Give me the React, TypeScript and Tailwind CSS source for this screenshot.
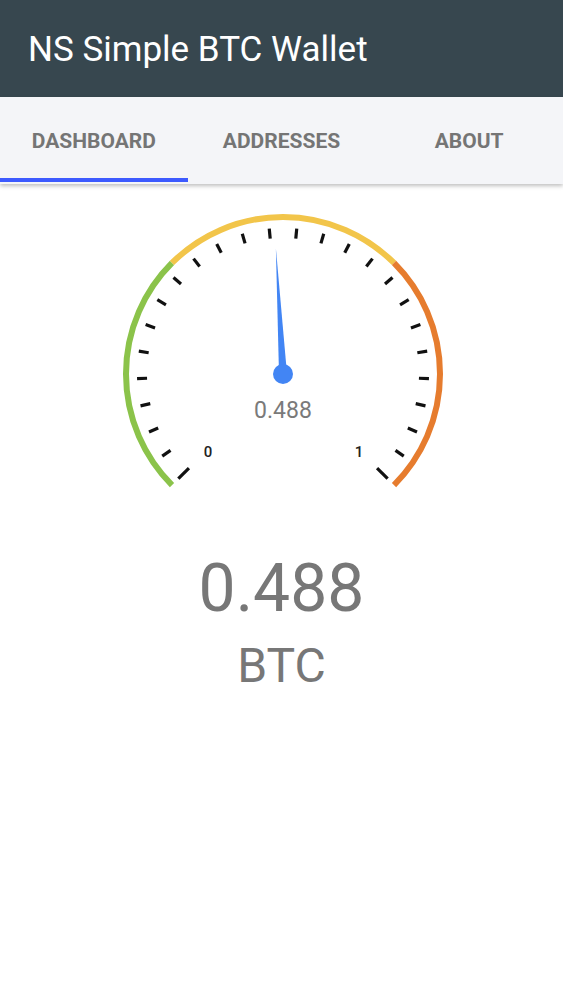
import React from "react";

const CX = 171;
const CY = 174;

function pt(r: number, deg: number) {
  const a = (deg * Math.PI) / 180;
  return { x: CX + r * Math.cos(a), y: CY - r * Math.sin(a) };
}

function arc(r: number, from: number, to: number) {
  const p1 = pt(r, from);
  const p2 = pt(r, to);
  return `M ${p1.x} ${p1.y} A ${r} ${r} 0 0 1 ${p2.x} ${p2.y}`;
}

function Gauge({ value }: { value: number }) {
  const ticks = Array.from({ length: 26 }, (_, i) => {
    const deg = 225 - i * 10.8;
    const major = i === 0 || i === 25;
    const a = pt(major ? 133 : 136, deg);
    const b = pt(major ? 148 : 146, deg);
    return <line key={i} x1={a.x} y1={a.y} x2={b.x} y2={b.y} stroke="#111" strokeWidth={3.2} />;
  });
  const nd = 225 - value * 270;
  const tip = pt(126, nd);
  const l = pt(4, nd + 90);
  const r = pt(4, nd - 90);
  return (
    <svg width={340} height={300} viewBox="0 0 340 300">
      <path d={arc(157, 225, 135)} stroke="#8bc34a" strokeWidth={6} fill="none" />
      <path d={arc(157, 135, 45)} stroke="#f2c54a" strokeWidth={6} fill="none" />
      <path d={arc(157, 45, -45)} stroke="#e67c2e" strokeWidth={6} fill="none" />
      {ticks}
      <text x={96} y={257} fontSize={15} fontWeight={500} fill="#222" textAnchor="middle" fontFamily="Roboto, sans-serif">0</text>
      <text x={247} y={257} fontSize={15} fontWeight={500} fill="#222" textAnchor="middle" fontFamily="Roboto, sans-serif">1</text>
      <text x={CX} y={218} fontSize={23} fill="#7a7a7a" textAnchor="middle" fontFamily="Roboto, sans-serif">0.488</text>
      <polygon points={`${l.x},${l.y} ${tip.x},${tip.y} ${r.x},${r.y}`} fill="#4285f4" />
      <circle cx={CX} cy={CY} r={10} fill="#4285f4" />
    </svg>
  );
}

export default function App() {
  return (
    <div className="w-[563px] h-[1000px] bg-white overflow-hidden" style={{ fontFamily: "Roboto, 'Noto Sans', sans-serif" }}>
      <div className="h-[97px] bg-[#37474f] flex items-center pl-[28px]">
        <span className="text-white text-[35px] leading-none mt-[2px]">NS Simple BTC Wallet</span>
      </div>
      <div className="relative h-[87px] bg-[#f4f5f8] grid grid-cols-3 shadow-[0_2px_4px_rgba(0,0,0,0.25)] z-10">
        <div className="flex items-center justify-center text-[21px] font-bold text-[#757575] pt-[2px]">DASHBOARD</div>
        <div className="flex items-center justify-center text-[21px] font-bold text-[#757575] pt-[2px]">ADDRESSES</div>
        <div className="flex items-center justify-center text-[21px] font-bold text-[#757575] pt-[2px]">ABOUT</div>
        <div className="absolute left-0 bottom-[2px] w-[188px] h-[4px] bg-[#3d5afe]" />
      </div>
      <div className="flex flex-col items-center pt-[16px]">
        <Gauge value={0.488} />
        <div className="mt-[56px] text-[66px] leading-none text-[#777]">0.488</div>
        <div className="mt-[20px] text-[48px] leading-none text-[#777]">BTC</div>
      </div>
    </div>
  );
}
